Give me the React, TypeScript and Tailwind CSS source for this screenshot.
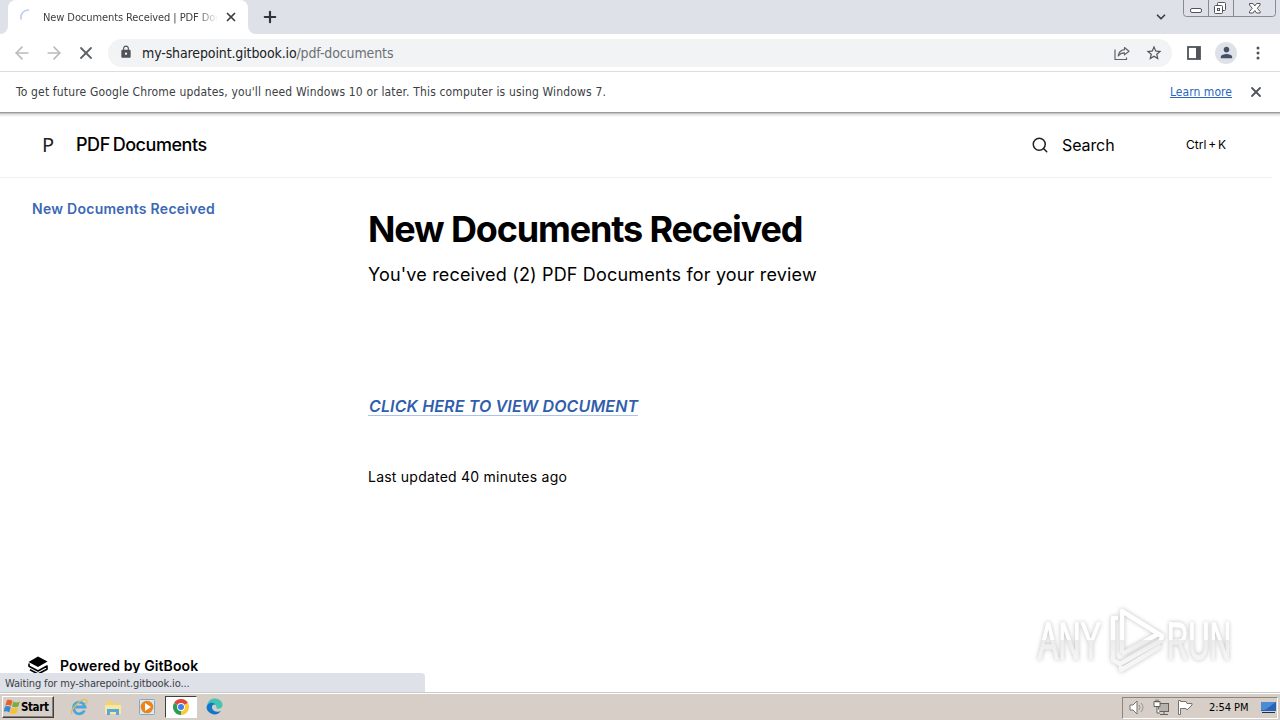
import React from 'react';
import { ChevronDown, Plus, Search, X, ArrowLeft, ArrowRight } from 'lucide-react';
import { MdLock, MdPerson, MdStarBorder } from 'react-icons/md';

function TabStrip() {
  return (
    <div className="relative flex h-[34px] items-start bg-[#dee1e8]">
      <div className="w-2 h-[34px] bg-white">
        <div className="h-full bg-[#dee1e8] rounded-br-lg" />
      </div>
      <div className="flex h-[34px] w-[240px] items-center rounded-t-lg bg-white pl-3 pr-[10px]">
        <svg className="h-4 w-4 shrink-0" viewBox="0 0 16 16" fill="none">
          <path d="M1.2 10.5A7.2 7.2 0 0 1 9 1.2" stroke="#c3d0f5" strokeWidth="1.8" />
        </svg>
        <div className="ml-[7px] w-[176px] overflow-hidden whitespace-nowrap pt-px text-[11px] leading-[16px] tracking-[-0.09px] text-[#3c4043] [mask-image:linear-gradient(to_right,black_88%,transparent)]">
          New Documents Received | PDF Documents
        </div>
        <X className="ml-[6px] h-[14px] w-[14px] shrink-0 text-[#3c4043]" strokeWidth={3} />
      </div>
      <div className="h-[34px] w-2 bg-white">
        <div className="h-full rounded-bl-lg bg-[#dee1e8]" />
      </div>
      <Plus className="ml-[5px] mt-2 h-[18px] w-[18px] text-[#30343b]" strokeWidth={2.9} />
      <ChevronDown className="ml-auto mr-[15px] mt-[10px] h-[14px] w-[14px] text-[#3c4043]" strokeWidth={3} />
      <svg className="mr-[3px] h-[18px] w-[94px]" viewBox="0 0 94 18" fill="none" stroke="#878a92">
        <path d="M.5 0v13.5q0 3 3 3h86q3 0 3-3V0M25.5 0v16M50.5 0v16" />
        <rect x="7.500" y="8.500" width="11" height="4" rx="1.500" fill="#fff" stroke="#50545c" />
        <rect x="34.500" y="2.500" width="8" height="8" rx="1" fill="#fff" stroke="#50545c" />
        <rect x="31.500" y="5.500" width="8" height="8" rx="1" fill="#fff" stroke="#50545c" />
        <rect x="34.500" y="8.500" width="2" height="2" stroke="#50545c" />
        <path d="M66.500 3.500h3.500l1.800 2.500 1.800-2.500h3.500v1.500L74.300 8.300l2.800 3.200v1.500h-3.500l-1.800-2.500-1.800 2.500h-3.500v-1.500l2.800-3.200-2.800-3.300z" fill="#fff" stroke="#50545c" />
      </svg>
    </div>
  );
}

function Toolbar() {
  return (
    <div className="flex h-[38px] items-center border-b border-[#dadce0] bg-white pl-3">
      <ArrowLeft className="h-5 w-5 text-[#b9bbbe]" strokeWidth={2} />
      <ArrowRight className="ml-3 h-5 w-5 text-[#b9bbbe]" strokeWidth={2} />
      <X className="ml-3 h-5 w-5 text-[#5f6368]" strokeWidth={2.2} />
      <div className="ml-3 flex h-7 w-[1064px] items-center rounded-full bg-[#f1f3f4] pl-[11px] pr-[9px]">
        <MdLock className="mb-[2px] h-[14px] w-[14px] text-[#50545a]" />
        <div className="ml-[9px] whitespace-nowrap text-[14px] leading-5 tracking-[-0.12px] text-[#202124]">
          my-sharepoint.gitbook.io<span className="text-[#6c7075]">/pdf-documents</span>
        </div>
        <svg className="ml-auto h-4 w-4" viewBox="0 0 16 16" fill="none" stroke="#5f6368" strokeWidth="1.200">
          <path d="M1 4.500v10h11.500V12.500" />
          <path d="M10.500 2.500 15 6.200l-4.500 3.700V7.800C8 7.600 6 8.600 4.200 11 4.700 7.500 6.800 5.200 10.500 4.700z" strokeLinejoin="round" />
        </svg>
        <MdStarBorder className="ml-[15px] h-[18px] w-[18px] text-[#50545a]" />
      </div>
      <svg className="ml-[15px] h-[14px] w-[14px]" viewBox="0 0 14 14">
        <rect x="1" y="1" width="12" height="12" fill="none" stroke="#50545a" strokeWidth="1.800" />
        <rect x="9" y="1" width="4" height="12" fill="#50545a" />
      </svg>
      <div className="ml-[14px] flex h-[22px] w-[22px] items-center justify-center rounded-full bg-[#dee1e6]">
        <MdPerson className="h-[17px] w-[17px] text-[#46506b]" />
      </div>
      <svg className="ml-[19px] h-[14px] w-1" viewBox="0 0 4 14" fill="#50545a">
        <circle cx="2" cy="2" r="1.500" />
        <circle cx="2" cy="7" r="1.500" />
        <circle cx="2" cy="12" r="1.500" />
      </svg>
    </div>
  );
}

function InfoBar() {
  return (
    <div className="flex h-[40px] items-center bg-white pl-4 pr-4 text-[12px] text-[#3c4043]">
      <span className="whitespace-nowrap tracking-[0.16px]">
        To get future Google Chrome updates, you'll need Windows 10 or later. This computer is using Windows 7.
      </span>
      <a className="ml-auto whitespace-nowrap text-[#2a66c0] underline tracking-[0.05px]">Learn more</a>
      <X className="ml-4 h-4 w-4 text-[#50545a]" strokeWidth={2.7} />
    </div>
  );
}

function GitbookPage() {
  return (
    <div className="relative h-[580px] overflow-hidden bg-white font-['Inter',sans-serif] text-black">
      <div className="h-px bg-[#9b9b9b]" />
      <div className="h-px bg-[#c5c5c5]" />
      <div className="h-[3px] bg-linear-to-b from-[#dddddd] to-white" />
      <header className="mr-2 flex h-[61px] items-center border-b border-[#f0f0f0] pb-[5px] pl-[42px]">
        <span className="w-[34px] font-['Noto_Sans',sans-serif] text-[20px] leading-6 text-[#222]">P</span>
        <span className="whitespace-nowrap text-[18px] font-medium tracking-[-0.45px] [word-spacing:-1.5px]">PDF Documents</span>
        <Search className="ml-auto h-[18px] w-[18px] text-[#222]" strokeWidth={2} />
        <span className="ml-[13px] w-[124px] text-[16px] tracking-[-0.1px]">Search</span>
        <span className="w-[86px] whitespace-nowrap text-[12px] [word-spacing:-1.5px]">Ctrl + K</span>
      </header>

      <div className="flex">
        <aside className="w-[368px] pl-8 pt-[18px]">
          <a className="whitespace-nowrap text-[14px] font-semibold leading-5 tracking-[0.27px] text-[#3b68b5]">New Documents Received</a>
        </aside>
        <main className="pt-[29px]">
          <h1 className="whitespace-nowrap text-[36px] font-bold leading-[45px] tracking-[-1.15px]">New Documents Received</h1>
          <p className="mt-[10px] whitespace-nowrap text-[18px] leading-[26px] tracking-[0.17px]">
            You've received (2) PDF Documents for your review
          </p>
          <p className="mt-[106px] h-[24px]">
            <a className="inline-block whitespace-nowrap border-b border-[#a9c4e8] pl-px text-[16px] font-semibold italic leading-[17px] tracking-[0.14px] text-[#315eac]">
              CLICK HERE TO VIEW DOCUMENT
            </a>
          </p>
          <p className="mt-[49px] whitespace-nowrap text-[14px] leading-5 tracking-[0.23px]">Last updated 40 minutes ago</p>
        </main>
      </div>

      {/* Sidebar footer */}
      <div className="absolute bottom-[15px] left-[27px] flex h-6 items-center">
        <svg className="h-5 w-[22px]" viewBox="0 0 22 20">
          <path d="M11 1.500 20.500 6.500 11 12 1.500 7z" fill="#000" />
          <path d="M2 8.500v2.700L11 16l9-5v3.300L11 19 3 14.700" fill="none" stroke="#000" strokeWidth="1.600" strokeLinejoin="round" />
        </svg>
        <span className="ml-[11px] whitespace-nowrap text-[14px] font-semibold tracking-[0.1px]">Powered by GitBook</span>
      </div>

      {/* Status bubble */}
      <div className="absolute bottom-0 left-0 h-[19px] w-[425px] rounded-tr bg-[#dee1e8] pl-[5px] font-['DejaVu_Sans_Condensed','DejaVu_Sans',sans-serif] text-[11px] leading-[21px] tracking-[-0.14px] text-[#3c4043]">
        Waiting for my-sharepoint.gitbook.io...
      </div>

      <Watermark />
    </div>
  );
}

function Watermark() {
  return (
    <svg className="absolute bottom-[16px] left-[1030px] h-[72px] w-[210px] drop-shadow-[0_0_2px_rgba(0,0,0,0.25)]" viewBox="0 0 210 72">
      <defs>
        <linearGradient id="wm" x1="0" y1="0" x2="0" y2="72" gradientUnits="userSpaceOnUse">
          <stop offset="0.500" stopColor="#fff" />
          <stop offset="0.500" stopColor="#ececec" />
          <stop offset="0.800" stopColor="#f6f6f6" />
        </linearGradient>
      </defs>
      <g className="font-['Liberation_Sans_Narrow','Liberation_Sans',sans-serif]" fill="url(#wm)" stroke="url(#wm)" strokeWidth="1.300" fontSize="51">
        <text x="8" y="55" textLength="63" lengthAdjust="spacingAndGlyphs">ANY</text>
        <text x="137" y="55" textLength="64" lengthAdjust="spacingAndGlyphs">RUN</text>
      </g>
      <g fill="none" stroke="url(#wm)" strokeWidth="4.500" strokeLinejoin="round">
        <path d="M88 14h-5v42l7 4 42-24" />
        <path d="M92 49V7l40 25-1 4" />
        <path d="m92 50 36-20" />
        <path d="M91 62v4l40-24" />
      </g>
    </svg>
  );
}

function TaskIcons() {
  return (
    <>
      <svg className="ml-[15px] h-5 w-5" viewBox="0 0 20 20" fill="none">
        <path d="M15.500 13.500A5.800 5.800 0 1 1 16 10H5" stroke="#4aa6de" strokeWidth="2.800" />
        <path d="M3 17C0 14 13 0 17 3c2 1 .500 3-1 5" stroke="#e3bd56" strokeWidth="1.300" />
      </svg>
      <svg className="ml-[14px] h-5 w-5" viewBox="0 0 20 20">
        <path d="M3 4h6l1 2h7v11H3z" fill="#f1d375" />
        <path d="M2 8h16v9H2z" fill="#f7e6a5" />
        <path d="M4 18v-6h12v6h-3v-3H7v3z" fill="#55aad8" />
      </svg>
      <svg className="ml-[14px] h-5 w-5" viewBox="0 0 20 20">
        <rect x="2.500" y="2.500" width="15" height="15" rx="1" fill="#d7ebf6" stroke="#80a9c4" />
        <circle cx="10" cy="10" r="6.300" fill="#ee8319" />
        <path d="M8 6v8l6-4z" fill="#fff" />
      </svg>
      <div className="ml-[8px] flex h-[22px] w-[32px] items-center justify-center border border-[#404040] border-b-white border-r-white bg-white">
        <svg className="h-4 w-4" viewBox="0 0 16 16">
          <path d="M8 8 1.070 4A8 8 0 0 1 14.930 4z" fill="#df4939" />
          <path d="M8 8 14.930 4A8 8 0 0 1 8 16z" fill="#fbcb3b" />
          <path d="M8 8v8A8 8 0 0 1 1.070 4z" fill="#2d9c55" />
          <circle cx="8" cy="8" r="3.900" fill="#fff" />
          <circle cx="8" cy="8" r="3" fill="#4080e8" />
        </svg>
      </div>
      <svg className="ml-[9px] h-[17px] w-[17px]" viewBox="0 0 17 17">
        <path d="M1 9C1 3 5 .500 9 .500c5 0 8 4 7.500 7-.500 3-3 3.500-6 3 0-3-1-4.500-3-4.500S2 7 1 9z" fill="#42c6b1" />
        <path d="M.500 9C2 4 7 4 9.500 6.500 7 6 5.500 8 6 10c.500 3 5 5 9 3-3 4-7 4-10 2.500S.500 12 .500 9z" fill="#1476ca" />
      </svg>
    </>
  );
}

function Taskbar() {
  return (
    <div className="flex h-[28px] items-center border-t border-[#c9cbc4] bg-[#d6cec7] pl-[2px] shadow-[inset_0_1px_0_#fff]">
      <div className="mt-px flex h-[22px] w-[52px] items-center border border-[#404040] border-l-white border-t-white pl-px text-[11.5px] font-bold text-black shadow-[inset_-1px_-1px_0_#85807b]">
        <svg className="h-4 w-4 shrink-0" viewBox="0 0 16 16">
          <path d="M3 1q3-1 5.500 1L7 7Q4.500 5.500 1.300 6.500z" fill="#e8602c" />
          <path d="M9.300 2.500q3 2 6.500 0L14.300 7.500q-3 1.500-6.300 0z" fill="#79ad3c" />
          <path d="M1 7.500q3.300-1.300 5.800.500L5.300 13.500q-2.500-2-5.800-.800z" fill="#348bd0" />
          <path d="M7.500 8.700q3.300 1.500 6.500 0L12.500 14q-3.200 2-6.500 0z" fill="#f8c12e" />
        </svg>
        <span className="ml-px pt-px tracking-[-0.4px]">Start</span>
      </div>
      <TaskIcons />
      <div className="ml-auto mr-[2px] mt-[2px] flex h-[22px] w-[156px] items-center border border-[#8a8680] border-b-white border-r-white pl-[6px] text-[11px] text-black">
        <svg className="h-[17px] w-4 shrink-0" viewBox="0 0 16 17" fill="none" stroke="#77736f">
          <path d="M1 6h3l4-4v13l-4-4H1z" fill="#fff" />
          <path d="M10 6q2 2.500 0 5M12 4q4 4.500 0 9" stroke="#99958f" />
        </svg>
        <svg className="ml-[8px] h-[17px] w-[17px] shrink-0" viewBox="0 0 17 17" fill="none" stroke="#65615d">
          <rect x="5.500" y="4.500" width="10" height="8" fill="#b5b2af" />
          <path d="M7 15.500h8M11 13v2" />
          <path d="M1 2.500h6v5H1zM3 .500v3M5 .500v3M4 7v7h3" fill="#fff" />
        </svg>
        <svg className="ml-[7px] h-[17px] w-[17px] shrink-0" viewBox="0 0 17 17" fill="#fff" stroke="#77736f">
          <path d="M1.500 1.500v14h2V9.500H9L10 11l5-5V4.500h-5L9 2.500H3.500v-1z" />
        </svg>
        <span className="ml-[15px] whitespace-nowrap pt-px tracking-[-0.05px]">2:54 PM</span>
        <svg className="ml-auto mr-[1px] h-[15px] w-[15px] shrink-0" viewBox="0 0 15 15">
          <path d="M0 2h15v9H0z" fill="#2865b7" />
          <path d="M0 2h15L4 10H0z" fill="#4c8bd3" />
          <path d="M1 12h13v1H1z" fill="#1a2f50" />
        </svg>
      </div>
    </div>
  );
}

export default function App() {
  return (
    <div className="h-[720px] w-[1280px] overflow-hidden bg-white font-['DejaVu_Sans_Condensed','DejaVu_Sans',sans-serif]">
      <TabStrip />
      <Toolbar />
      <InfoBar />
      <GitbookPage />
      <Taskbar />
    </div>
  );
}
